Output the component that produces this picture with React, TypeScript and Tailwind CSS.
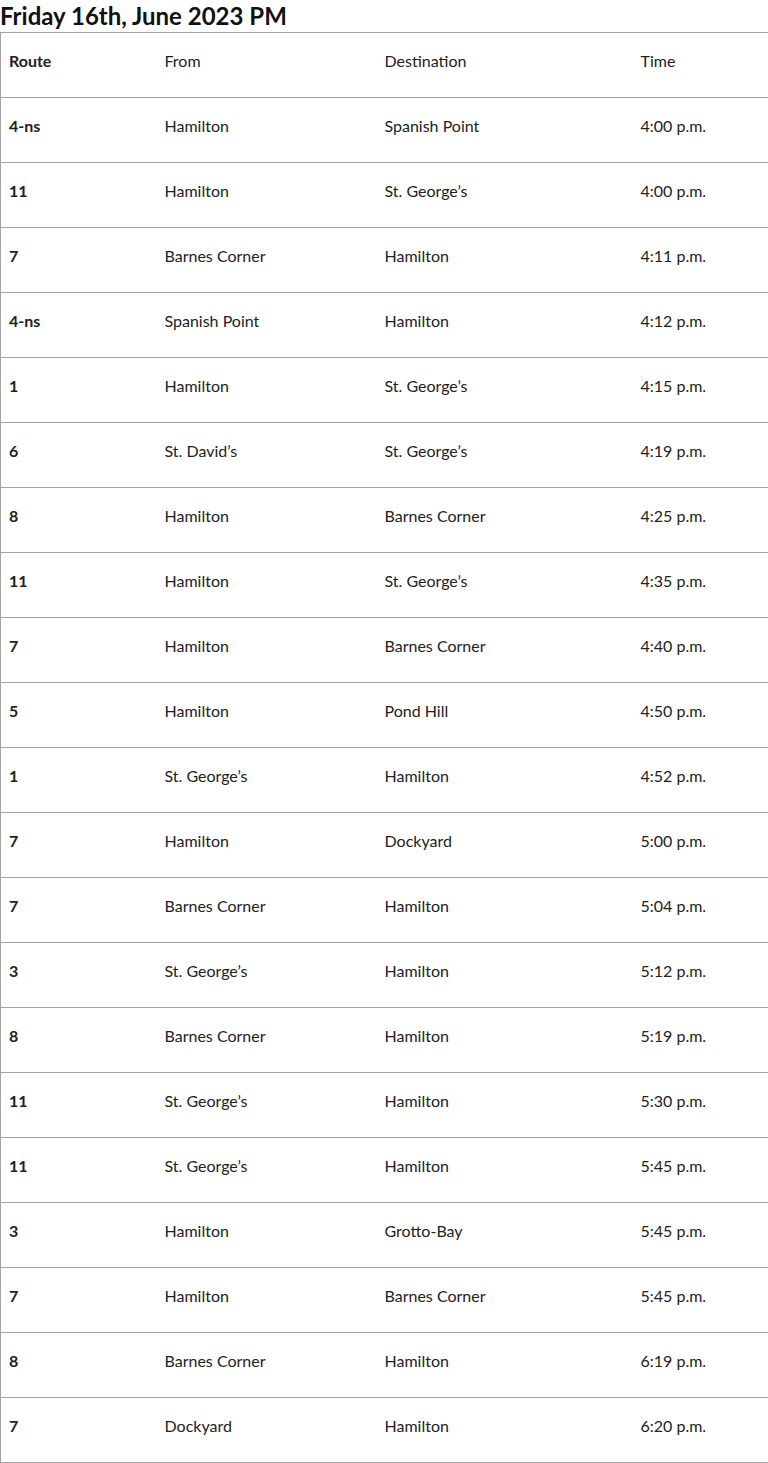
const rows: [string, string, string, string][] = [
  ["4-ns", "Hamilton", "Spanish Point", "4:00 p.m."],
  ["11", "Hamilton", "St. George’s", "4:00 p.m."],
  ["7", "Barnes Corner", "Hamilton", "4:11 p.m."],
  ["4-ns", "Spanish Point", "Hamilton", "4:12 p.m."],
  ["1", "Hamilton", "St. George’s", "4:15 p.m."],
  ["6", "St. David’s", "St. George’s", "4:19 p.m."],
  ["8", "Hamilton", "Barnes Corner", "4:25 p.m."],
  ["11", "Hamilton", "St. George’s", "4:35 p.m."],
  ["7", "Hamilton", "Barnes Corner", "4:40 p.m."],
  ["5", "Hamilton", "Pond Hill", "4:50 p.m."],
  ["1", "St. George’s", "Hamilton", "4:52 p.m."],
  ["7", "Hamilton", "Dockyard", "5:00 p.m."],
  ["7", "Barnes Corner", "Hamilton", "5:04 p.m."],
  ["3", "St. George’s", "Hamilton", "5:12 p.m."],
  ["8", "Barnes Corner", "Hamilton", "5:19 p.m."],
  ["11", "St. George’s", "Hamilton", "5:30 p.m."],
  ["11", "St. George’s", "Hamilton", "5:45 p.m."],
  ["3", "Hamilton", "Grotto-Bay", "5:45 p.m."],
  ["7", "Hamilton", "Barnes Corner", "5:45 p.m."],
  ["8", "Barnes Corner", "Hamilton", "6:19 p.m."],
  ["7", "Dockyard", "Hamilton", "6:20 p.m."],
];

export default function App() {
  return (
    <div className="w-[768px] bg-white text-[#111] font-['Lato','Noto_Sans',sans-serif]">
      <h2 className="text-[24px] leading-[32px] font-bold text-[#111]">
        Friday 16th, June 2023 PM
      </h2>
      <table className="w-[768px] border-collapse table-fixed text-[16px] leading-[24px] text-[#222]">
        <colgroup>
          <col className="w-[156px]" />
          <col className="w-[220px]" />
          <col className="w-[256px]" />
          <col className="w-[136px]" />
        </colgroup>
        <tbody>
          <tr className="h-[65px]">
            <td className="border border-[#a3a3a3] border-r-0 px-2 pt-[16px] align-top font-bold">Route</td>
            <td className="border-y border-[#a3a3a3] px-2 pt-[16px] align-top">From</td>
            <td className="border-y border-[#a3a3a3] px-2 pt-[16px] align-top">Destination</td>
            <td className="border border-[#a3a3a3] border-l-0 px-2 pt-[16px] align-top">Time</td>
          </tr>
          {rows.map((r, i) => (
            <tr key={i} className="h-[65px]">
              <td className="border border-[#a3a3a3] border-r-0 px-2 pt-[16px] align-top font-bold">{r[0]}</td>
              <td className="border-y border-[#a3a3a3] px-2 pt-[16px] align-top">{r[1]}</td>
              <td className="border-y border-[#a3a3a3] px-2 pt-[16px] align-top">{r[2]}</td>
              <td className="border border-[#a3a3a3] border-l-0 px-2 pt-[16px] align-top">{r[3]}</td>
            </tr>
          ))}
        </tbody>
      </table>
    </div>
  );
}
